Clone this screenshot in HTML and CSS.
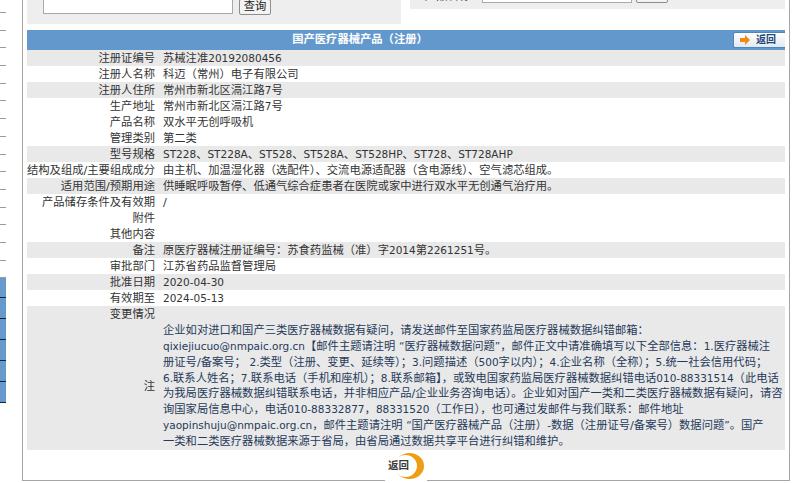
FILE: index.html
```html
<!DOCTYPE html>
<html lang="zh-CN">
<head>
<meta charset="utf-8">
<title>国产医疗器械产品（注册）</title>
<link rel="stylesheet" href="styles.css">
</head>
<body>
<div class="page">
  <aside class="side">
    <div class="side-white">
      <i></i><i></i><i></i><i></i><i></i><i></i><i></i><i></i><i></i><i></i><i></i><i></i><i></i><i></i><i></i><i></i>
    </div>
    <div class="side-blue">
      <i></i><i></i><i></i><i></i><i></i><i></i>
    </div>
  </aside>
  <main class="main">
    <div class="search">
      <form class="panel panel-left">
        <input class="field field-left" type="text">
        <button class="btn" type="button">查询</button>
      </form>
      <form class="panel panel-right">
        <span class="panel-label">产品名称</span>
        <input class="field field-right" type="text">
        <button class="btn btn-right" type="button">查询</button>
      </form>
    </div>
    <div class="head">
      <span class="head-title">国产医疗器械产品（注册）</span>
      <a class="back-top">
        <svg class="back-arrow" width="10" height="10" viewBox="0 0 10 10"><path d="M0 3h5V0l5 5-5 5V7H0z" fill="#f08a12"/></svg>
        <span>返回</span>
      </a>
    </div>
    <table class="info">
      <colgroup><col class="col-l"><col></colgroup>
      <tr class="g"><th>注册证编号</th><td>苏械注准<span class="en">20192080456</span></td></tr>
      <tr><th>注册人名称</th><td>科迈（常州）电子有限公司</td></tr>
      <tr class="g"><th>注册人住所</th><td>常州市新北区滆江路<span class="en">7</span>号</td></tr>
      <tr><th>生产地址</th><td>常州市新北区滆江路<span class="en">7</span>号</td></tr>
      <tr><th>产品名称</th><td>双水平无创呼吸机</td></tr>
      <tr><th>管理类别</th><td>第二类</td></tr>
      <tr class="g"><th>型号规格</th><td><span class="en">ST228</span>、<span class="en">ST228A</span>、<span class="en">ST528</span>、<span class="en">ST528A</span>、<span class="en">ST528HP</span>、<span class="en">ST728</span>、<span class="en">ST728AHP</span></td></tr>
      <tr><th>结构及组成/主要组成成分</th><td>由主机、加温湿化器（选配件）、交流电源适配器（含电源线）、空气滤芯组成。</td></tr>
      <tr class="g"><th>适用范围/预期用途</th><td>供睡眠呼吸暂停、低通气综合症患者在医院或家中进行双水平无创通气治疗用。</td></tr>
      <tr><th>产品储存条件及有效期</th><td>/</td></tr>
      <tr><th>附件</th><td></td></tr>
      <tr><th>其他内容</th><td></td></tr>
      <tr class="g"><th>备注</th><td>原医疗器械注册证编号：苏食药监械（准）字<span class="en">2014</span>第<span class="en">2261251</span>号。</td></tr>
      <tr><th>审批部门</th><td>江苏省药品监督管理局</td></tr>
      <tr class="g"><th>批准日期</th><td><span class="en">2020-04-30</span></td></tr>
      <tr><th>有效期至</th><td><span class="en">2024-05-13</span></td></tr>
      <tr class="g"><th>变更情况</th><td></td></tr>
      <tr class="g"><th>注</th><td class="note">企业如对进口和国产三类医疗器械数据有疑问，请发送邮件至国家药监局医疗器械数据纠错邮箱：<br><span class="en">qixiejiucuo@nmpaic.org.cn</span>【邮件主题请注明 <span class="en">“</span>医疗器械数据问题<span class="en">”</span>，邮件正文中请准确填写以下全部信息：<span class="en">1.</span>医疗器械注<br>册证号/备案号； <span class="en">2.</span>类型（注册、变更、延续等）；<span class="en">3.</span>问题描述（<span class="en">500</span>字以内）；<span class="en">4.</span>企业名称（全称）；<span class="en">5.</span>统一社会信用代码；<br><span class="en">6.</span>联系人姓名；<span class="en">7.</span>联系电话（手机和座机）；<span class="en">8.</span>联系邮箱】，或致电国家药监局医疗器械数据纠错电话<span class="en">010-88331514</span>（此电话<br>为我局医疗器械数据纠错联系电话，并非相应产品/企业业务咨询电话）。企业如对国产一类和二类医疗器械数据有疑问，请咨<br>询国家局信息中心，电话<span class="en">010-88332877</span>，<span class="en">88331520</span>（工作日），也可通过发邮件与我们联系：邮件地址<br><span class="en">yaopinshuju@nmpaic.org.cn</span>，邮件主题请注明 <span class="en">“</span>国产医疗器械产品（注册）<span class="en">-</span>数据（注册证号/备案号）数据问题<span class="en">”</span>。国产<br>一类和二类医疗器械数据来源于省局，由省局通过数据共享平台进行纠错和维护。</td></tr>
    </table>
    <div class="foot">
      <a class="back-bottom">
        <span class="back-bottom-text">返回</span>
        <svg class="back-ring" width="29" height="26" viewBox="0 0 29 26"><ellipse cx="14.5" cy="13" rx="14.5" ry="13" fill="#ef9d12"/><ellipse cx="10.5" cy="13" rx="11.5" ry="11" fill="#fff"/></svg>
      </a>
    </div>
  </main>
</div>
</body>
</html>
```
FILE: styles.css
```css
* { box-sizing: border-box; }
html, body { margin: 0; padding: 0; height: 483px; overflow: hidden; background: #fff; }
body { font-family: "DejaVu Sans", "Noto Sans CJK SC", sans-serif; font-size: 11.3px; color: #333; }

.en { font-size: 10.5px; line-height: 1; }

.page { display: flex; gap: 16px; align-items: flex-start; }

.side { width: 6px; flex: none; display: flex; flex-direction: column; }
.side-white { height: 278px; display: flex; flex-direction: column; }
.side-white i { display: block; height: 17.7px; flex: none; border-bottom: 1px solid #9a9a9a; }
.side-white i:first-child { height: 13px; }
.side-blue { display: flex; flex-direction: column; }
.side-blue i { display: block; height: 21px; background: #6699cc; border-bottom: 1px solid #11233a; }
.side-blue i:first-child { height: 20px; }

.main { width: 768px; height: 481px; border: 1px solid #a5a5a5; border-top: 0; padding: 0 4px; display: flex; flex-direction: column; }

.search { height: 30px; display: flex; justify-content: space-between; align-items: flex-start; flex: none; }
.panel { background: #eeeeee; display: flex; align-items: flex-end; overflow: hidden; margin: 0; }
.panel-left { width: 374px; height: 24px; padding: 0 0 9px 16px; }
.panel-right { width: 375px; height: 9px; padding: 0 0 6px 15px; }
.panel-label { width: 57px; flex: none; line-height: 16px; margin-bottom: -2px; }
.field { height: 24px; border: 1px solid #a9a9a9; background: #fff; padding: 0; flex: none; }
.field-left { width: 190px; margin-bottom: 1px; }
.field-right { width: 150px; margin-bottom: 0; }
.btn { width: 32px; height: 16px; flex: none; margin: 0 0 0 6px; padding: 0; border: 1px solid #8d8d8d; border-radius: 2px; background: #f3f3f3; font: 11.3px/14px "DejaVu Sans", "Noto Sans CJK SC", sans-serif; color: #222; }
.btn-right { margin-left: 4px; }

.head { height: 20px; flex: none; background: #6398cc; display: grid; grid-template-columns: 1fr 92px; align-items: center; }
.head-title { text-align: center; color: #fff; font-weight: 700; line-height: 20px; }
.back-top { justify-self: end; width: 52px; height: 16px; display: flex; align-items: center; gap: 6px; padding-left: 6px; background: linear-gradient(#ffffff, #e2e9f0); border: 1px solid #4f86bb; border-right: 0; border-radius: 2px 0 0 2px; font-size: 10px; font-weight: 700; color: #1e4a78; line-height: 14px; }
.back-arrow { flex: none; }

.info { width: 758px; border-collapse: collapse; table-layout: fixed; flex: none; }
.col-l { width: 128px; }
.info th, .info td { padding: 1px 0 0; height: 16px; line-height: 15px; font-size: 11.3px; font-weight: 400; white-space: nowrap; color: #333; }
.info th { text-align: right; }
.info td { padding-left: 8px; }
.info tr.g { background: #e9e9e9; }
.info td.note { color: #263a5a; line-height: 15.86px; }

.foot { display: flex; justify-content: center; flex: none; height: 33px; }
.back-bottom { width: 42px; height: 33px; background: #fff; display: flex; align-items: flex-start; padding-left: 3px; }
.back-bottom-text { position: relative; z-index: 1; flex: none; width: 22px; margin-top: 8px; font-size: 10.5px; font-weight: 700; color: #3a3a3a; line-height: 14px; }
.back-ring { flex: none; margin-left: -15px; margin-top: 3px; }
```
